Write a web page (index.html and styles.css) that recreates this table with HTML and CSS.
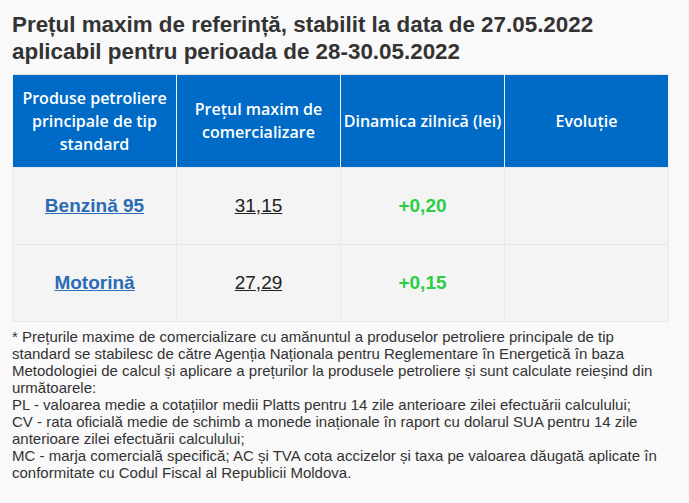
FILE: index.html
```html
<!DOCTYPE html>
<html lang="ro">
<head>
<meta charset="utf-8">
<title>Prețul maxim de referință</title>
<link rel="stylesheet" href="styles.css">
</head>
<body>
<div class="wrap">
  <h1 class="title">Prețul maxim de referință, stabilit la data de 27.05.2022 aplicabil pentru perioada de 28-30.05.2022</h1>
  <table class="prices">
    <thead>
      <tr>
        <th>Produse petroliere principale de tip standard</th>
        <th>Prețul maxim de comercializare</th>
        <th>Dinamica zilnică (lei)</th>
        <th>Evoluție</th>
      </tr>
    </thead>
    <tbody>
      <tr>
        <td><a class="product" href="#">Benzină 95</a></td>
        <td class="price"><span class="u">31</span>,<span class="u">15</span></td>
        <td class="delta">+0,20</td>
        <td></td>
      </tr>
      <tr>
        <td><a class="product" href="#">Motorină</a></td>
        <td class="price"><span class="u">27</span>,<span class="u">29</span></td>
        <td class="delta">+0,15</td>
        <td></td>
      </tr>
    </tbody>
  </table>
  <p class="note">* Prețurile maxime de comercializare cu amănuntul a produselor petroliere principale de tip standard se stabilesc de către Agenția Naționala pentru Reglementare în Energetică în baza Metodologiei de calcul și aplicare a prețurilor la produsele petroliere și sunt calculate reieșind din următoarele:<br>PL - valoarea medie a cotațiilor medii Platts pentru 14 zile anterioare zilei efectuării calculului;<br>CV - rata oficială medie de schimb a monede inaționale în raport cu dolarul SUA pentru 14 zile anterioare zilei efectuării calculului;<br>MC - marja comercială specifică; AC și TVA cota accizelor și taxa pe valoarea dăugată aplicate în conformitate cu Codul Fiscal al Republicii Moldova.</p>
</div>
</body>
</html>
```
FILE: styles.css
```css
html, body {
  margin: 0;
  padding: 0;
  background: #f9f9f9;
}
.wrap {
  width: 657px;
  padding: 12px 0 0 12px;
  font-family: "Liberation Sans", Arial, sans-serif;
  color: #333;
}
.title {
  margin: 0 0 9px 0;
  font-size: 22.4px;
  line-height: 26.5px;
  font-weight: bold;
  color: #333;
}
.prices {
  width: 657px;
  border-collapse: collapse;
  table-layout: fixed;
  border: 1px solid #e6e6e6;
}
.prices th {
  background: #006bc7;
  color: #fff;
  font-family: "Open Sans", sans-serif;
  font-weight: 600;
  font-size: 16px;
  line-height: 23px;
  height: 93px;
  padding: 0 1px;
  box-sizing: border-box;
  text-align: center;
  vertical-align: middle;
  border-left: 1px solid #f2f2f2;
  border-right: 1px solid #f2f2f2;
}
.prices td {
  background: #f4f4f4;
  height: 76px;
  padding: 0 4px;
  text-align: center;
  vertical-align: middle;
  border: 1px solid #e8e8e8;
  font-size: 19px;
}
.product {
  color: #2b6bb5;
  font-weight: bold;
  text-decoration: underline;
}
.price {
  color: #222;
}
.u {
  text-decoration: underline;
}
.delta {
  color: #2bcd47;
  font-weight: bold;
}
.note {
  margin: 6px 0 0 0;
  font-size: 15px;
  line-height: 17px;
  color: #333;
}
```
